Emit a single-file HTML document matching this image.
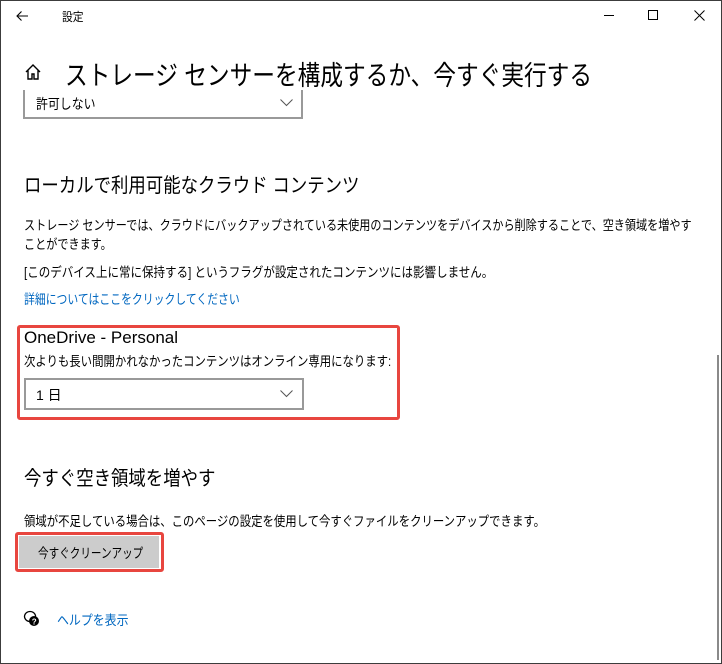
<!DOCTYPE html>
<html><head><meta charset="utf-8"><style>
*{margin:0;padding:0;box-sizing:border-box}
body{width:722px;height:664px;position:relative;background:#fff;overflow:hidden;font-family:"Liberation Sans","Noto Sans CJK JP",sans-serif;color:#000}
.frame{position:absolute;left:0;top:0;width:722px;height:664px;border:1px solid #3c3c3c}
.a{position:absolute;white-space:nowrap;transform-origin:0 0}
.dd{position:absolute;border:2px solid #999;background:#fff}
.red{position:absolute;border:3px solid #e8463f;border-radius:3px}
</style></head><body>
<div class="frame"></div>
<svg class="a" style="left:15px;top:9px" width="14" height="14" viewBox="0 0 14 14"><path d="M13 7H2M6.5 2.5L2 7l4.5 4.5" stroke="#000" fill="none" stroke-width="1.1"/></svg>
<div class="a" style="left:62px;top:8px;font-size:12px;transform:scaleX(0.9)">設定</div>
<div class="a" style="left:604px;top:15px;width:10px;border-top:1px solid #000"></div>
<div class="a" style="left:648px;top:10px;width:10px;height:10px;border:1px solid #000"></div>
<svg class="a" style="left:694px;top:10px" width="11" height="11"><path d="M0.5 0.5L10.5 10.5M10.5 0.5L0.5 10.5" stroke="#000"/></svg>
<svg class="a" style="left:24px;top:63px" width="18" height="18" viewBox="0 0 18 18"><path d="M2 9L9 2l7 7M4 7.5V16h4v-5h2v5h4V7.5" stroke="#000" fill="none" stroke-width="1.4"/></svg>
<div class="a" style="left:65px;top:54px;font-size:27px;transform:scaleX(0.84)">ストレージ センサーを構成するか、今すぐ実行する</div>
<div class="dd" style="left:23px;top:90px;width:280px;height:29px;border-top:none"></div>
<div class="a" style="left:36px;top:94px;font-size:14px;transform:scaleX(0.85)">許可しない</div>
<svg class="a" style="left:280px;top:99px" width="13" height="8"><path d="M0.5 0.5L6.5 6.5L12.5 0.5" stroke="#555" fill="none"/></svg>
<div class="a" style="left:24px;top:169px;font-size:20px;transform:scaleX(0.87)">ローカルで利用可能なクラウド コンテンツ</div>
<div class="a" style="left:24px;top:216px;font-size:13.4px;line-height:19px;transform:scaleX(0.83)">ストレージ センサーでは、クラウドにバックアップされている未使用のコンテンツをデバイスから削除することで、空き領域を増やす<br>ことができます。</div>
<div class="a" style="left:24px;top:261px;font-size:13.4px;transform:scaleX(0.86)">[このデバイス上に常に保持する] というフラグが設定されたコンテンツには影響しません。</div>
<div class="a" style="left:24px;top:288px;font-size:13.4px;color:#0067c0;transform:scaleX(0.81)">詳細についてはここをクリックしてください</div>
<div class="red" style="left:17px;top:325px;width:383px;height:95px"></div>
<div class="a" style="left:24px;top:328px;font-size:17px">OneDrive - Personal</div>
<div class="a" style="left:24px;top:350px;font-size:13.4px;transform:scaleX(0.85)">次よりも長い間開かれなかったコンテンツはオンライン専用になります:</div>
<div class="dd" style="left:24px;top:378px;width:280px;height:32px"></div>
<div class="a" style="left:36px;top:385px;font-size:14px">1 日</div>
<svg class="a" style="left:280px;top:390px" width="13" height="8"><path d="M0.5 0.5L6.5 6.5L12.5 0.5" stroke="#555" fill="none"/></svg>
<div class="a" style="left:24px;top:462px;font-size:20px;transform:scaleX(0.87)">今すぐ空き領域を増やす</div>
<div class="a" style="left:24px;top:510px;font-size:13.4px;transform:scaleX(0.85)">領域が不足している場合は、このページの設定を使用して今すぐファイルをクリーンアップできます。</div>
<div class="a" style="left:18px;top:535px;width:142px;height:34px;background:#ccc;border:1px solid #fff"></div>
<div class="red" style="left:15px;top:532px;width:149px;height:40px"></div>
<div class="a" style="left:38px;top:542px;font-size:13.4px;transform:scaleX(0.79)">今すぐクリーンアップ</div>
<svg class="a" style="left:23px;top:610px" width="18" height="18" viewBox="0 0 18 18"><path d="M7 1.5a5.5 5 0 1 0 0.1 0z" fill="none" stroke="#000" stroke-width="1.3"/><circle cx="11" cy="11" r="5" fill="#000"/><text x="8.8" y="14.5" font-size="8" fill="#fff" font-family="Liberation Sans" font-weight="bold">?</text></svg>
<div class="a" style="left:57px;top:609px;font-size:13.4px;color:#0067c0;transform:scaleX(0.89)">ヘルプを表示</div>
<div class="a" style="left:717px;top:355px;width:2px;height:305px;background:#8a8a8a"></div>
</body></html>
